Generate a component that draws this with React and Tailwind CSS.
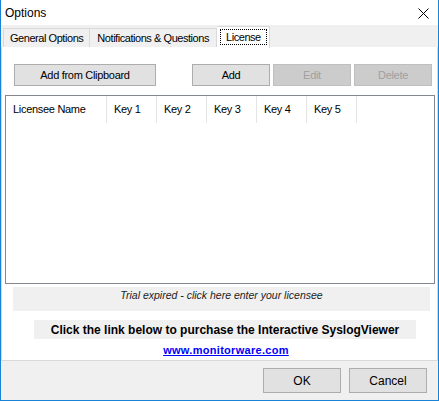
export default function App() {
  const cols = [
    { name: "Licensee Name", w: "w-[101px]" },
    { name: "Key 1", w: "w-[50px]" },
    { name: "Key 2", w: "w-[50px]" },
    { name: "Key 3", w: "w-[50px]" },
    { name: "Key 4", w: "w-[50px]" },
    { name: "Key 5", w: "w-[50px]" },
  ];

  return (
    <div className="w-[439px] h-[401px] flex flex-col bg-white border-x border-b border-[#1883d7] font-['Liberation_Sans',Arial,sans-serif] text-[11px] text-black select-none">
      {/* Title bar */}
      <div className="h-[25px] flex items-center justify-between bg-white pl-[4px] pr-[9px]">
        <span className="text-[12px] leading-none">Options</span>
        <svg width="11" height="11" viewBox="0 0 11 11" className="mt-[1px]">
          <path d="M0.5 0.5 L10.5 10.5 M10.5 0.5 L0.5 10.5" stroke="#000" strokeWidth="1" fill="none" />
        </svg>
      </div>

      {/* Body */}
      <div className="flex-1 flex flex-col bg-[#f0f0f0]">
        {/* Tabs */}
        <div className="h-[22px] flex items-end pl-[2px] tracking-[-0.45px]">
          <div className="h-[19px] px-[6px] flex items-center border border-b-0 border-[#d9d9d9] bg-[#f0f0f0]">
            General Options
          </div>
          <div className="h-[19px] px-[7px] flex items-center border border-b-0 border-l-0 border-[#d9d9d9] bg-[#f0f0f0]">
            Notifications &amp; Questions
          </div>
          <div className="h-[22px] -mb-px relative z-10 pl-[3px] pr-[2px] pt-[2px] flex items-start border border-b-0 border-l-0 border-[#d9d9d9] bg-white">
            <span className="px-[5px] leading-[14px] border border-dotted border-black">License</span>
          </div>
        </div>

        {/* Panel */}
        <div className="h-[314px] flex flex-col items-start bg-white border-x border-b border-[#d9d9d9]">
          <div className="w-full flex items-center pt-[17px] pl-[12px] tracking-[-0.3px]">
            <button className="w-[142px] h-[22px] bg-[#e1e1e1] border border-[#adadad]">Add from Clipboard</button>
            <button className="ml-[36px] w-[78px] h-[22px] bg-[#e1e1e1] border border-[#adadad]">Add</button>
            <button className="ml-[3px] w-[78px] h-[22px] bg-[#cccccc] border border-[#bfbfbf] text-[#a0a0a0]">Edit</button>
            <button className="ml-[3px] w-[78px] h-[22px] bg-[#cccccc] border border-[#bfbfbf] text-[#a0a0a0]">Delete</button>
          </div>

          {/* List view */}
          <div className="ml-[3px] mt-[9px] w-[430px] h-[189px] border border-[#828790] bg-white">
            <div className="flex h-[27px] tracking-[-0.3px]">
              {cols.map((c) => (
                <div key={c.name} className={`${c.w} h-full flex items-center pl-[7px] border-r border-[#e5e5e5]`}>
                  {c.name}
                </div>
              ))}
            </div>
          </div>

          <div className="ml-[11px] mt-[3px] w-[417px] h-[24px] bg-[#f0f0f0] text-center italic text-[#222] leading-[14px] pt-[1px] text-[10.5px]">
            Trial expired - click here enter your licensee
          </div>

          <div className="ml-[32px] mt-[9px] w-[382px] h-[19px] bg-[#f0f0f0] flex items-center justify-center font-bold text-[12px]">
            Click the link below to purchase the Interactive SyslogViewer
          </div>

          <div className="w-full mt-[3px] pl-[13px] text-center">
            <span className="font-bold text-[#0000ff] underline tracking-[0.3px]">www.monitorware.com</span>
          </div>
        </div>

        {/* Footer */}
        <div className="flex-1 flex items-start justify-end pt-[7px] pr-[11px] gap-[8px]">
          <button className="w-[78px] h-[25px] bg-[#e1e1e1] border border-[#adadad] text-[12px]">OK</button>
          <button className="w-[78px] h-[25px] bg-[#e1e1e1] border border-[#adadad] text-[12px]">Cancel</button>
        </div>
      </div>
    </div>
  );
}
